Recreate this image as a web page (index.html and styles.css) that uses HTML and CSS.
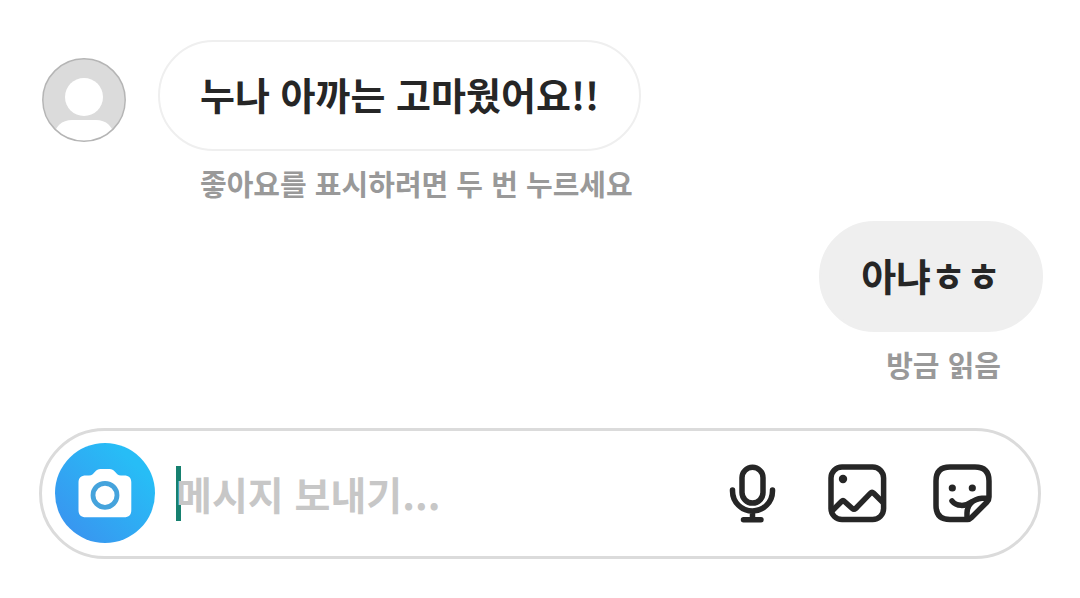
FILE: index.html
```
<!DOCTYPE html>
<html lang="ko">
<head>
    <meta charset="UTF-8">
    <meta name="viewport" content="width=device-width, initial-scale=1.0">
    <title>메시지</title>
    <link rel="stylesheet" href="styles.css">
</head>
<body>
    <main class="chat">
        <div class="message received">
            <svg class="avatar" viewBox="0 0 84 84" aria-hidden="true">
                <clipPath id="avatar-clip"><circle cx="42" cy="42" r="41"/></clipPath>
                <circle cx="42" cy="42" r="41" fill="#dbdbdb"/>
                <g clip-path="url(#avatar-clip)" fill="#fff">
                    <circle cx="42" cy="39" r="19"/>
                    <path d="M10 84C12 68 20 62 30 62H54C64 62 72 68 74 84Z"/>
                </g>
                <circle cx="42" cy="42" r="41.2" fill="none" stroke="#b5b5b5" stroke-width="1.5"/>
            </svg>
            <div class="content">
                <p class="bubble">누나 아까는 고마웠어요!!</p>
                <p class="note">좋아요를 표시하려면 두 번 누르세요</p>
            </div>
        </div>

        <div class="message sent">
            <div class="content">
                <p class="bubble">아냐ㅎㅎ</p>
                <p class="note">방금 읽음</p>
            </div>
        </div>

        <form class="composer">
            <button class="camera" type="button" aria-label="카메라">
                <svg viewBox="0 0 100 100">
                    <path fill="#fff" d="M31 32.5H34C37 32.5 38 31 40 28.8C41.8 27 43 26 45.5 26H54.5C57 26 58.2 27 60 28.8C62 31 63 32.5 66 32.5H69C74 32.500 76.3 35 76.3 39.5V67C76.3 72 74 74.3 69 74.3H31C26 74.3 23.5 72 23.5 67V39.5C23.5 35 26 32.5 31 32.5Z"/>
                    <circle cx="50" cy="52.3" r="12" fill="none" stroke="#45a3dc" stroke-width="4.8"/>
                </svg>
            </button>
            <label class="field">
                <input type="text" aria-label="메시지" placeholder="메시지 보내기...">
            </label>
            <button class="action" type="button" aria-label="음성 메시지">
                <svg class="icon" viewBox="0 0 60 60">
                    <rect x="20" y="4.3" width="21" height="35.8" rx="10.5"/>
                    <path d="M10.5 27V28A20 20 0 0 0 50.5 28V27M30.5 48V56M21.5 56.7H39"/>
                </svg>
            </button>
            <button class="action" type="button" aria-label="사진">
                <svg class="icon" viewBox="0 0 60 60">
                    <rect x="4" y="4" width="52.6" height="52.6" rx="11"/>
                    <path d="M5 48L14.5 38.5Q16 37 17.500 38.500L25.3 45.5Q27 47 28.7 45.5L43.3 30.3Q45 28.6 46.7 30.3L56 39.5"/>
                    <circle class="dot" cx="16" cy="16" r="4.2"/>
                </svg>
            </button>
            <button class="action" type="button" aria-label="스티커">
                <svg class="icon" viewBox="0 0 60 60">
                    <path d="M35.5 56.5H18Q4 56.5 4 42.5V18Q4 4 18 4H43Q57 4 57 18V34Q57 37 55 39L39.5 54.5Q37.5 56.5 35.5 56.5Z"/>
                    <path d="M56 35.3H50C41 36 35 42 35 50V56"/>
                    <path d="M20 38C24.5 43.5 33 43.8 39.5 39"/>
                    <circle class="dot" cx="20.3" cy="25" r="3.6"/>
                    <circle class="dot" cx="40.3" cy="25" r="3.6"/>
                </svg>
            </button>
        </form>
    </main>
</body>
</html>
```
FILE: styles.css
```
* {
    box-sizing: border-box;
}

body {
    margin: 0;
    background-color: #fff;
    color: #262626;
    font-family: "Noto Sans CJK KR", sans-serif;
    font-weight: bold;
}

.chat {
    display: flex;
    flex-direction: column;
    padding: 40px 39px;
}

.message {
    display: flex;
    align-items: flex-start;
}

.received {
    gap: 32px;
    padding-left: 3px;
    margin-bottom: 6px;
}

.sent {
    justify-content: flex-end;
    margin-right: -2px; /* sent bubbles reach slightly past the composer */
    margin-bottom: 32px;
}

.avatar {
    flex: none;
    width: 84px;
    height: 84px;
    margin-top: 18px;
}

.bubble {
    width: fit-content;
    margin: 0;
    padding: 24px 40px 28px;
    border: 2px solid #efefef;
    border-radius: 56px;
    font-size: 38px;
    line-height: 55px;
}

.sent .bubble {
    margin-left: auto;
    background-color: #efefef;
}

.note {
    margin: 0;
    padding: 0 42px;
    color: #999;
    font-size: 29px;
    line-height: 64px;
}

.sent .note {
    text-align: right;
}

.composer {
    display: flex;
    align-items: center;
    gap: 45px;
    padding: 12px 46px 13px 13px;
    border: 3px solid #dbdbdb;
    border-radius: 66px;
}

button {
    flex: none;
    padding: 0;
    border: 0;
    background: none;
    cursor: pointer;
}

button svg {
    display: block;
    width: 100%;
}

.camera {
    width: 100px;
    height: 100px;
    border-radius: 50%;
    background: linear-gradient(45deg, #3897f0 15%, #27bdf6 80%);
}

.field {
    position: relative;
    flex: 1;
    min-width: 0;
    margin-left: -24px;
}

/* thick text cursor behind the placeholder */
.field::before {
    content: "";
    position: absolute;
    top: 0;
    left: 0;
    width: 5px;
    height: 55px;
    background-color: #16806f;
}

input {
    position: relative;
    display: block;
    width: 100%;
    height: 55px;
    padding: 0;
    border: 0;
    outline: none;
    background: transparent;
    color: #262626;
    font: inherit;
    font-size: 39px;
}

input::placeholder {
    color: #c7c7c7;
    opacity: 1;
}

.action {
    width: 60px;
    height: 60px;
}

.icon {
    fill: none;
    stroke: #262626;
    stroke-width: 5.5;
    stroke-linecap: round;
    stroke-linejoin: round;
}

.dot {
    fill: #262626;
    stroke: none;
}
```
